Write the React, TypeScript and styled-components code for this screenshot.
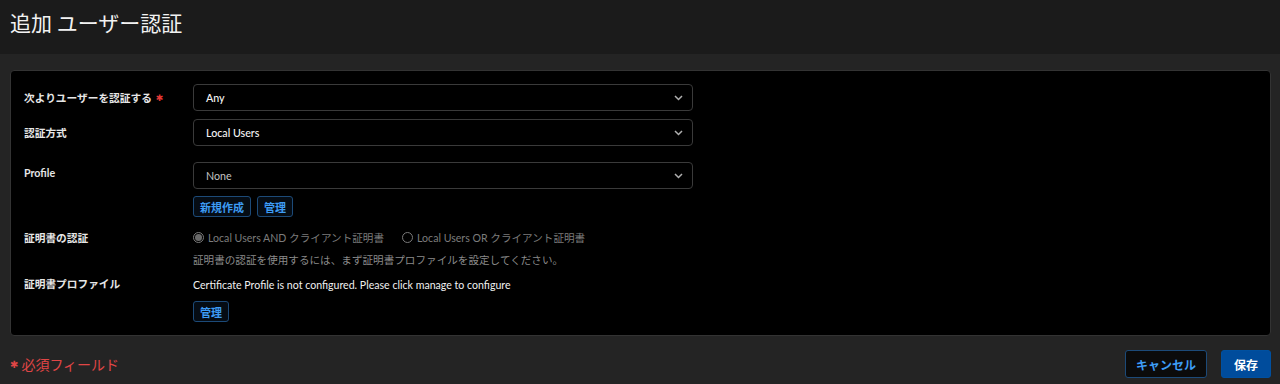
import React from "react";
import styled, { createGlobalStyle } from "styled-components";

const Global = createGlobalStyle`
  html, body { margin: 0; padding: 0; background: #242424; }
  body { font-family: Lato, "Noto Sans CJK JP", sans-serif; color: #e6e6e6; }
  * { box-sizing: border-box; }
`;

const Page = styled.div`
  width: 1280px;
  height: 384px;
  display: flex;
  flex-direction: column;
  background: #242424;
  overflow: hidden;
`;

const Header = styled.header`
  height: 54px;
  flex: none;
  background: #1b1b1b;
  display: flex;
  align-items: flex-start;
  padding: 7px 0 0 10px;
`;

const Title = styled.h1`
  margin: 0;
  font-size: 21px;
  line-height: 30px;
  font-weight: 400;
  color: #f2f2f2;
  font-family: "Noto Sans CJK JP", sans-serif;
`;

const Card = styled.section`
  margin: 16px 9px 0 10px;
  height: 266px;
  background: #000;
  border: 1px solid #333;
  border-radius: 4px;
  padding: 13px 0 0 13px;
  display: flex;
  flex-direction: column;
`;

const Row = styled.div<{ $mt?: number }>`
  display: grid;
  grid-template-columns: 169px 500px;
  margin-top: ${(p) => p.$mt ?? 0}px;
`;

const Label = styled.div<{ $align?: string; $pt?: number }>`
  font-size: 10.7px;
  font-weight: 700;
  color: #e6e6e6;
  align-self: ${(p) => p.$align ?? "center"};
  padding-top: ${(p) => p.$pt ?? 0}px;
  display: flex;
  align-items: center;
  gap: 4px;
`;

const Req = styled.span`
  color: #e53935;
  font-size: 9px;
  font-family: "DejaVu Sans", sans-serif;
`;

const Field = styled.div`
  display: flex;
  flex-direction: column;
`;

const Select = styled.div<{ $muted?: boolean }>`
  height: 27px;
  border: 1px solid #3a3a3a;
  border-radius: 4px;
  background: #000;
  display: flex;
  align-items: center;
  justify-content: space-between;
  padding: 0 9px 0 12px;
  font-size: 10.7px;
  color: ${(p) => (p.$muted ? "#c4c4c4" : "#f4f4f4")};
  font-weight: ${(p) => (p.$muted ? 400 : 500)};
`;

const ButtonRow = styled.div<{ $mt?: number }>`
  display: flex;
  gap: 6px;
  margin-top: ${(p) => p.$mt ?? 0}px;
`;

const SmallBtn = styled.button`
  height: 21px;
  padding: 0 6px;
  border: 1px solid #1c4a78;
  border-radius: 3px;
  background: #050c14;
  color: #3d9cf5;
  font-size: 11px;
  font-weight: 700;
  font-family: "Noto Sans CJK JP", sans-serif;
  display: flex;
  align-items: center;
`;

const Radios = styled.div`
  display: flex;
  align-items: center;
  gap: 18px;
  height: 20px;
`;

const RadioItem = styled.label`
  display: flex;
  align-items: center;
  gap: 4px;
  font-size: 10.6px;
  color: #7c7c7c;
`;

const RadioDot = styled.span<{ $on?: boolean }>`
  width: 11px;
  height: 11px;
  border-radius: 50%;
  border: 1px solid #7a7a7a;
  display: inline-flex;
  align-items: center;
  justify-content: center;
  &::after {
    content: "";
    width: 7px;
    height: 7px;
    border-radius: 50%;
    background: ${(p) => (p.$on ? "#6a6a6a" : "transparent")};
  }
`;

const Help = styled.div`
  font-size: 10.6px;
  color: #8a8a8a;
  margin-top: 3px;
  height: 18px;
  display: flex;
  align-items: center;
`;

const Info = styled.div`
  font-size: 10.6px;
  color: #f0f0f0;
  height: 18px;
  display: flex;
  align-items: center;
`;

const Footer = styled.footer`
  flex: 1;
  display: flex;
  align-items: center;
  justify-content: space-between;
  padding: 8px 9px 0 10px;
`;

const Required = styled.div`
  color: #e04646;
  font-size: 14px;
  font-family: "Noto Sans CJK JP", sans-serif;
  display: flex;
  align-items: center;
  gap: 3px;
`;

const Star = styled.span`
  font-family: "DejaVu Sans", sans-serif;
  font-size: 10px;
`;

const Actions = styled.div`
  display: flex;
  gap: 14px;
`;

const Btn = styled.button<{ $primary?: boolean }>`
  height: 28px;
  padding: 0 ${(p) => (p.$primary ? 12 : 10)}px;
  border-radius: 3px;
  border: 1px solid ${(p) => (p.$primary ? "#0050a0" : "#1c4a78")};
  background: ${(p) => (p.$primary ? "#004c9c" : "#0b0b0b")};
  color: ${(p) => (p.$primary ? "#fff" : "#3d9cf5")};
  font-size: 12px;
  font-weight: 700;
  font-family: "Noto Sans CJK JP", sans-serif;
`;

const Chevron = () => (
  <svg width="9" height="6" viewBox="0 0 9 6" fill="none">
    <path d="M1 1l3.5 3.5L8 1" stroke="#b0b0b0" strokeWidth="1.5" />
  </svg>
);

export default function App() {
  return (
    <Page>
      <Global />
      <Header>
        <Title>追加 ユーザー認証</Title>
      </Header>
      <Card>
        <Row>
          <Label>
            次よりユーザーを認証する<Req>✱</Req>
          </Label>
          <Select>
            Any
            <Chevron />
          </Select>
        </Row>
        <Row $mt={8}>
          <Label>認証方式</Label>
          <Select>
            Local Users
            <Chevron />
          </Select>
        </Row>
        <Row $mt={16}>
          <Label $align="start" $pt={4}>Profile</Label>
          <Field>
            <Select $muted>
              None
              <Chevron />
            </Select>
            <ButtonRow $mt={7}>
              <SmallBtn>新規作成</SmallBtn>
              <SmallBtn>管理</SmallBtn>
            </ButtonRow>
          </Field>
        </Row>
        <Row $mt={10}>
          <Label $align="start" $pt={3}>証明書の認証</Label>
          <Field>
            <Radios>
              <RadioItem>
                <RadioDot $on />
                Local Users AND クライアント証明書
              </RadioItem>
              <RadioItem>
                <RadioDot />
                Local Users OR クライアント証明書
              </RadioItem>
            </Radios>
            <Help>証明書の認証を使用するには、まず証明書プロファイルを設定してください。</Help>
          </Field>
        </Row>
        <Row $mt={8}>
          <Label $align="start" $pt={0}>証明書プロファイル</Label>
          <Field>
            <Info>Certificate Profile is not configured. Please click manage to configure</Info>
            <ButtonRow $mt={7}>
              <SmallBtn>管理</SmallBtn>
            </ButtonRow>
          </Field>
        </Row>
      </Card>
      <Footer>
        <Required>
          <Star>✱</Star>必須フィールド
        </Required>
        <Actions>
          <Btn>キャンセル</Btn>
          <Btn $primary>保存</Btn>
        </Actions>
      </Footer>
    </Page>
  );
}
